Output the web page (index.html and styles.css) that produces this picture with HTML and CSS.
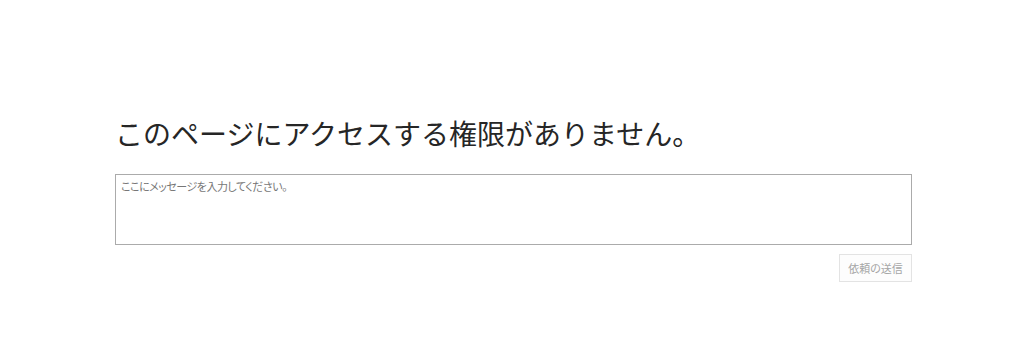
FILE: index.html
```html
<!DOCTYPE html>
<html lang="ja">
<head>
<meta charset="utf-8">
<link rel="stylesheet" href="styles.css">
</head>
<body>
<main class="page">
  <h1 class="title">このページにアクセスする権限がありません。</h1>
  <textarea class="message" placeholder="ここにメッセージを入力してください。"></textarea>
  <div class="actions">
    <button class="send" type="button">依頼の送信</button>
  </div>
</main>
</body>
</html>
```

FILE: styles.css
```css
html, body {
  margin: 0;
  padding: 0;
  background: #ffffff;
}
body {
  font-family: "Noto Sans CJK JP", "Noto Sans", sans-serif;
  color: #222222;
}
.page {
  width: 797px;
  margin-left: 115px;
  padding-top: 115px;
  display: flex;
  flex-direction: column;
}
.title {
  margin: 0 0 22px 0;
  font-size: 28px;
  font-weight: normal;
  line-height: 37px;
  color: #262626;
  letter-spacing: 0;
}
.message {
  box-sizing: border-box;
  width: 797px;
  height: 71px;
  margin: 0;
  padding: 3px 5px;
  border: 1px solid #ababab;
  font-family: "Noto Sans CJK JP", sans-serif;
  font-size: 11px;
  line-height: 16px;
  letter-spacing: -0.5px;
  font-feature-settings: "palt";
  resize: none;
  outline: none;
}
.message::placeholder {
  color: #777777;
}
.actions {
  display: flex;
  justify-content: flex-end;
  margin-top: 9px;
}
.send {
  box-sizing: border-box;
  width: 73px;
  height: 28px;
  padding: 0;
  border: 1px solid #e3e3e3;
  background: #fdfdfd;
  color: #a6a6a6;
  font-family: "Noto Sans CJK JP", sans-serif;
  font-size: 11px;
  font-feature-settings: "palt";
}
```
